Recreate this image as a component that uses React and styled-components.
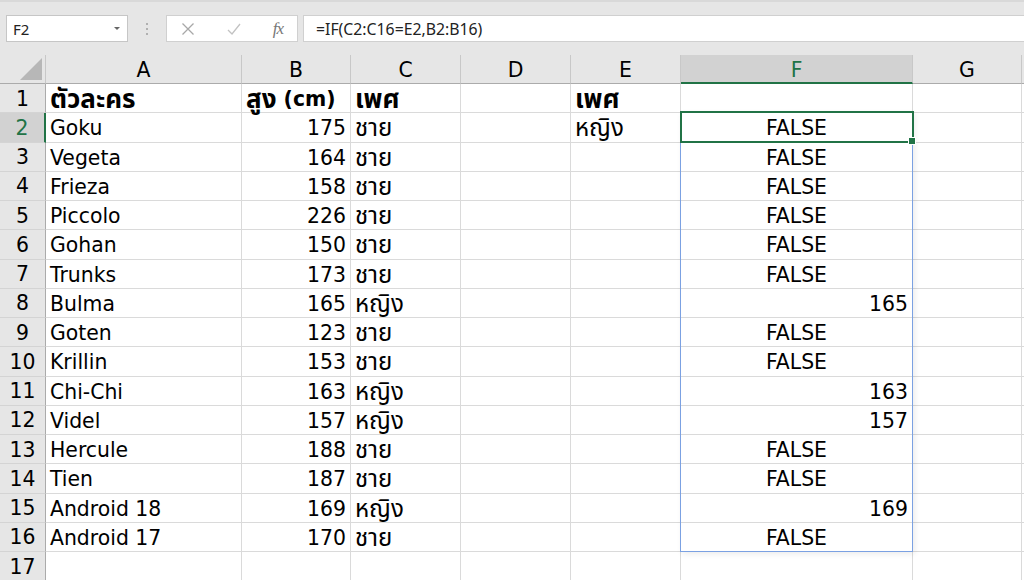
import React from "react";
import styled, { createGlobalStyle } from "styled-components";

const GlobalStyle = createGlobalStyle`
    html, body {
        margin: 0;
        padding: 0;
        background: #ffffff;
        overflow: hidden;
    }
    body {
        font-family: "DejaVu Sans", "Noto Sans Thai", "Noto Sans", sans-serif;
    }
`;

const COLS = [46, 196, 109, 110, 110, 110, 232, 109, 110];
const HEAD_H = 29;
const ROW_H = 29.25;

const rows = [
    ["Goku", 175, "ชาย", false],
    ["Vegeta", 164, "ชาย", false],
    ["Frieza", 158, "ชาย", false],
    ["Piccolo", 226, "ชาย", false],
    ["Gohan", 150, "ชาย", false],
    ["Trunks", 173, "ชาย", false],
    ["Bulma", 165, "หญิง", 165],
    ["Goten", 123, "ชาย", false],
    ["Krillin", 153, "ชาย", false],
    ["Chi-Chi", 163, "หญิง", 163],
    ["Videl", 157, "หญิง", 157],
    ["Hercule", 188, "ชาย", false],
    ["Tien", 187, "ชาย", false],
    ["Android 18", 169, "หญิง", 169],
    ["Android 17", 170, "ชาย", false],
];

const Page = styled.div`
    width: 1024px;
    height: 580px;
    display: flex;
    flex-direction: column;
    background: #ffffff;
`;

const Toolbar = styled.div`
    height: 55px;
    flex: none;
    display: flex;
    align-items: center;
    gap: 5px;
    padding: 0 0 0 6px;
    background: #e6e6e6;
    border-top: 2px solid #d9d9d9;
    box-sizing: border-box;
`;

const NameBox = styled.div`
    width: 122px;
    height: 27px;
    box-sizing: border-box;
    background: #fff;
    border: 1px solid #c6c6c6;
    display: flex;
    align-items: center;
    justify-content: space-between;
    padding: 0 7px 0 6px;
    font-family: "Noto Sans", "Open Sans", sans-serif;
    font-size: 15px;
    color: #222;
`;

const Caret = styled.span`
    width: 0;
    height: 0;
    border-left: 3px solid transparent;
    border-right: 3px solid transparent;
    border-top: 3px solid #666;
`;

const Dots = styled.div`
    width: 28px;
    display: flex;
    flex-direction: column;
    align-items: center;
    gap: 3px;
    span {
        width: 2px;
        height: 2px;
        background: #b0b0b0;
    }
`;

const FxBox = styled.div`
    width: 132px;
    height: 27px;
    box-sizing: border-box;
    background: #fff;
    border: 1px solid #d0d0d0;
    display: flex;
    align-items: center;
    justify-content: space-between;
    padding: 0 14px 0 14px;
`;

const FxLabel = styled.span`
    font-family: "Liberation Serif", serif;
    font-style: italic;
    font-size: 17px;
    color: #777;
    letter-spacing: -1px;
`;

const FormulaInput = styled.div`
    flex: 1;
    height: 27px;
    box-sizing: border-box;
    background: #fff;
    border: 1px solid #d0d0d0;
    border-right: none;
    display: flex;
    align-items: center;
    padding-left: 12px;
    font-family: "Noto Sans", "Open Sans", sans-serif;
    font-size: 15.8px;
    color: #222;
`;

const SheetWrap = styled.div`
    position: relative;
    flex: 1;
    overflow: hidden;
`;

const Sheet = styled.div`
    display: grid;
    grid-template-columns: ${COLS.map((c) => c + "px").join(" ")};
    grid-template-rows: ${HEAD_H}px;
    grid-auto-rows: ${ROW_H}px;
    font-size: 20.4px;
    color: #000;
`;

const Corner = styled.div`
    position: relative;
    background: #e6e6e6;
    border-right: 1px solid #c8c8c8;
    border-bottom: 1px solid #ababab;
    box-sizing: border-box;
    &::after {
        content: "";
        position: absolute;
        right: 3px;
        bottom: 3px;
        width: 0;
        height: 0;
        border-left: 22px solid transparent;
        border-bottom: 22px solid #b7b7b7;
    }
`;

const ColHead = styled.div`
    background: ${(p) => (p.$active ? "#d2d2d2" : "#e6e6e6")};
    color: ${(p) => (p.$active ? "#217346" : "#000")};
    border-right: 1px solid #c8c8c8;
    border-bottom: ${(p) => (p.$active ? "2px solid #217346" : "1px solid #ababab")};
    box-sizing: border-box;
    display: flex;
    align-items: center;
    justify-content: center;
    padding-top: 2px;
`;

const RowHead = styled.div`
    background: ${(p) => (p.$active ? "#d2d2d2" : "#e6e6e6")};
    color: ${(p) => (p.$active ? "#217346" : "#000")};
    border-right: ${(p) => (p.$active ? "2px solid #217346" : "1px solid #ababab")};
    border-bottom: 1px solid #d4d4d4;
    box-sizing: border-box;
    display: flex;
    align-items: center;
    justify-content: center;
    padding-top: 1px;
`;

const Cell = styled.div`
    border-right: 1px solid #dadada;
    border-bottom: 1px solid #dadada;
    box-sizing: border-box;
    display: flex;
    align-items: center;
    justify-content: ${(p) =>
        p.$align === "right" ? "flex-end" : p.$align === "center" ? "center" : "flex-start"};
    padding: 2px 4px 0;
    font-weight: ${(p) => (p.$bold ? 700 : 400)};
    white-space: nowrap;
    overflow: visible;
`;

const Thai = styled.span`
    font-size: ${(p) => (p.$bold ? "26px" : "24px")};
    line-height: 1;
`;

const SpillRange = styled.div`
    position: absolute;
    left: ${COLS.slice(0, 6).reduce((a, b) => a + b, 0) - 1}px;
    top: ${HEAD_H + ROW_H - 1}px;
    width: ${COLS[6] + 1}px;
    height: ${ROW_H * 15 + 1}px;
    box-sizing: border-box;
    border: 1px solid #7ba1e2;
    box-shadow: 2px 2px 6px rgba(0, 0, 0, 0.08);
    pointer-events: none;
`;

const ActiveCell = styled.div`
    position: absolute;
    left: ${COLS.slice(0, 6).reduce((a, b) => a + b, 0) - 1}px;
    top: ${HEAD_H + ROW_H - 2}px;
    width: ${COLS[6] + 2}px;
    height: ${ROW_H + 2}px;
    box-sizing: border-box;
    border: 2px solid #217346;
    pointer-events: none;
    &::after {
        content: "";
        position: absolute;
        right: -4px;
        bottom: -4px;
        width: 6px;
        height: 6px;
        background: #217346;
        border: 1px solid #fff;
    }
`;

const Icon = ({ children, color }) => (
    <svg width="14" height="14" viewBox="0 0 14 14" fill="none" stroke={color} strokeWidth="1.3">
        {children}
    </svg>
);

const letters = ["A", "B", "C", "D", "E", "F", "G", ""];

const App = () => {
    const body = [];
    const header = [
        <Cell key="a" $bold><Thai $bold>ตัวละคร</Thai></Cell>,
        <Cell key="b" $bold><Thai $bold>สูง</Thai>&nbsp;(cm)</Cell>,
        <Cell key="c" $bold><Thai $bold>เพศ</Thai></Cell>,
        <Cell key="d" />,
        <Cell key="e" $bold><Thai $bold>เพศ</Thai></Cell>,
        <Cell key="f" />,
        <Cell key="g" />,
        <Cell key="h" />,
    ];
    body.push(<RowHead key="r1">1</RowHead>, ...header);

    rows.forEach((r, i) => {
        const n = i + 2;
        const f = r[3];
        body.push(
            <RowHead key={"r" + n} $active={n === 2}>{n}</RowHead>,
            <Cell key={n + "a"}>{r[0]}</Cell>,
            <Cell key={n + "b"} $align="right">{r[1]}</Cell>,
            <Cell key={n + "c"}><Thai>{r[2]}</Thai></Cell>,
            <Cell key={n + "d"} />,
            <Cell key={n + "e"}>{n === 2 ? <Thai>หญิง</Thai> : ""}</Cell>,
            <Cell key={n + "f"} $align={f === false ? "center" : "right"}>
                {f === false ? "FALSE" : f}
            </Cell>,
            <Cell key={n + "g"} />,
            <Cell key={n + "h"} />
        );
    });

    body.push(<RowHead key="r17">17</RowHead>);
    for (let c = 0; c < 8; c++) body.push(<Cell key={"17" + c} />);

    return (
        <Page>
            <GlobalStyle />
            <Toolbar>
                <NameBox>
                    F2
                    <Caret />
                </NameBox>
                <Dots>
                    <span />
                    <span />
                    <span />
                </Dots>
                <FxBox>
                    <Icon color="#a8a8a8">
                        <path d="M1.5 1.5 L12.5 12.5 M12.5 1.5 L1.5 12.5" />
                    </Icon>
                    <Icon color="#c2c2c2">
                        <path d="M1 8 L5 12 L13 2" />
                    </Icon>
                    <FxLabel>fx</FxLabel>
                </FxBox>
                <FormulaInput>=IF(C2:C16=E2,B2:B16)</FormulaInput>
            </Toolbar>
            <SheetWrap>
                <Sheet>
                    <Corner />
                    {letters.map((l) => (
                        <ColHead key={"h" + l} $active={l === "F"}>
                            {l}
                        </ColHead>
                    ))}
                    {body}
                </Sheet>
                <SpillRange />
                <ActiveCell />
            </SheetWrap>
        </Page>
    );
};

export default App;
